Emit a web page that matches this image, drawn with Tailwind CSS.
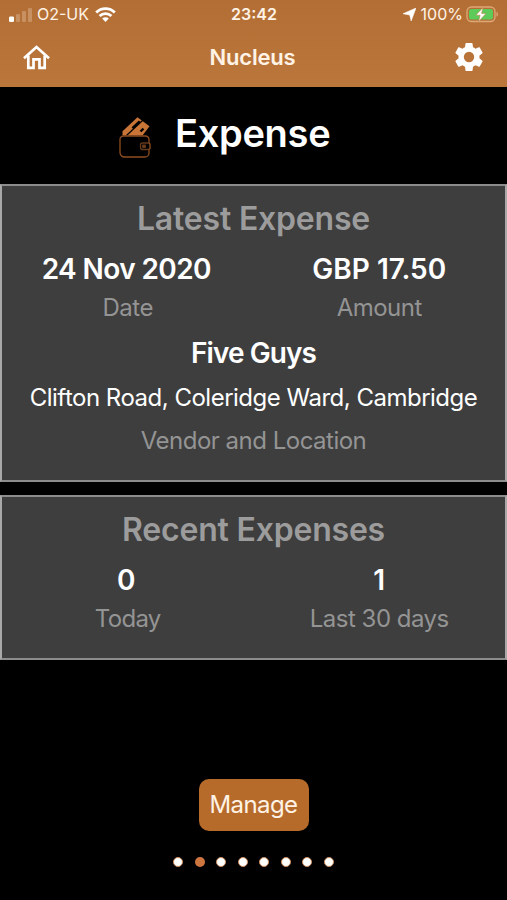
<!DOCTYPE html>
<html lang="en">
<head>
    <meta charset="UTF-8">
    <meta name="viewport" content="width=device-width, initial-scale=1.0">
    <title>Nucleus - Expense</title>
    <script src="https://cdn.jsdelivr.net/npm/@tailwindcss/browser@4"></script>
</head>
<body class="bg-black font-['Inter',sans-serif] text-white">
    <div class="flex flex-col h-[900px] w-[507px] overflow-hidden">
        <!-- Header -->
        <header class="h-[87px] shrink-0 bg-linear-to-b from-[#b36e35] to-[#bb763b] text-[#fff3e6]">
            <!-- Status bar -->
            <div class="grid grid-cols-3 items-center h-[29px] pl-[9px] pr-[8px] text-[16px] leading-[29px]">
                <div class="flex items-center">
                    <svg class="w-[23px] h-[14px]" viewBox="0 0 23 14" fill="currentColor">
                        <rect x="0" y="8.5" width="5" height="5.5" rx="1.2" fill="#fff"></rect>
                        <rect x="7" y="6" width="4" height="8" rx="1" opacity=".25"></rect>
                        <rect x="13" y="3" width="4" height="11" rx="1" opacity=".25"></rect>
                        <rect x="19" y="0" width="4" height="14" rx="1" opacity=".25"></rect>
                    </svg>
                    <span class="ml-[5px] whitespace-nowrap">O2-UK</span>
                    <svg class="ml-[6px] w-[21px] h-[15px]" viewBox="0 0 21 15" fill="none" stroke="#fff" stroke-width="2.8">
                        <path d="M1.2 5.4a13.2 13.2 0 0 1 18.6 0"></path>
                        <path d="M4.6 9a8.4 8.4 0 0 1 11.8 0"></path>
                        <path d="M7.2 11.600a4.700 4.700 0 0 1 6.600 0L10.500 15z" fill="#fff" stroke="none"></path>
                    </svg>
                </div>
                <span class="text-center font-semibold">23:42</span>
                <div class="flex items-center justify-end">
                    <svg class="w-[13px] h-[13px]" viewBox="0 0 12 12" fill="#fff">
                        <path d="M12 0 7.500 12 6.200 6.500 0 5.300z" stroke="#fff" stroke-width=".5"></path>
                    </svg>
                    <span class="ml-[5px]">100%</span>
                    <svg class="ml-[3px] w-[33px] h-[17px]" viewBox="0 0 33 17">
                        <rect x="1" y="1" width="28" height="14.500" rx="4.500" fill="none" stroke="#dfa878" stroke-width="1.300"></rect>
                        <rect x="3" y="3" width="24" height="10.500" rx="2.500" fill="#5ccb5a"></rect>
                        <path d="M30.500 5.800c2 .8 2 4.200 0 5z" fill="#dfa878"></path>
                        <path d="M17 1.500 9.800 9.200h4.300L12.600 15.500l7.400-8.100h-4.400z" fill="#fff" stroke="#b9854a" stroke-width=".6"></path>
                    </svg>
                </div>
            </div>
            <!-- Navigation bar -->
            <div class="flex items-center justify-between h-[57px] pl-[23px] pr-[24px]">
                <svg class="w-[27px] h-[25px]" viewBox="0 0 27 25" fill="none" stroke="#fff" stroke-width="2.700">
                    <path d="M1 13.300 13.500 2 26 13.300"></path>
                    <path d="M5.300 10.500v12.300h5.200v-8.400h6v8.400h5.200V10.500"></path>
                </svg>
                <h1 class="text-[22px] font-semibold tracking-[-0.2px]">Nucleus</h1>
                <svg class="w-[28px] h-[28px] -mt-[2px]" viewBox="2 2 20 20" fill="#fff">
                    <path d="M19.430 12.980c.04-.32.07-.64.07-.98s-.03-.66-.07-.98l2.110-1.650c.19-.15.24-.42.12-.64l-2-3.460c-.12-.22-.39-.3-.61-.22l-2.490 1c-.52-.4-1.080-.73-1.690-.98l-.38-2.650A.488.488 0 0 0 14 2h-4c-.25 0-.46.18-.49.42l-.38 2.650c-.61.25-1.170.59-1.690.98l-2.490-1c-.23-.09-.49 0-.61.22l-2 3.460c-.13.22-.07.49.12.64l2.110 1.650c-.04.32-.07.65-.07.98s.03.66.07.98l-2.110 1.650c-.19.15-.24.42-.12.64l2 3.460c.12.22.39.3.61.22l2.490-1c.52.4 1.080.73 1.690.98l.38 2.650c.03.24.24.42.49.42h4c.25 0 .46-.18.49-.42l.38-2.650c.61-.25 1.170-.59 1.690-.98l2.490 1c.23.09.49 0 .61-.22l2-3.460c.12-.22.07-.49-.12-.64zM12 15.700a3.700 3.700 0 1 1 0-7.400 3.700 3.700 0 0 1 0 7.400z"></path>
                </svg>
            </div>
        </header>

        <!-- Page title -->
        <div class="flex items-center h-[97px] shrink-0 pl-[118px]">
            <svg class="w-[34px] h-[42px] mt-[5px]" viewBox="0 0 34 42" fill="none">
                <path d="M4.500 18.500V14.300L19.500.300 31.500 9.300 24.500 18.500z" fill="#c87537"></path>
                <path d="M8.500 18.500 24.800 3.300" stroke="#000" stroke-width="1.200"></path>
                <path d="m14.500 11.300 7.300-6.900" stroke="#000" stroke-width="2.600"></path>
                <path d="m22.500 14.500 3-2.800" stroke="#000" stroke-width="2.300"></path>
                <path d="M31 26v-3.500a3.500 3.500 0 0 0-3.500-3.500H5.500A3.500 3.500 0 0 0 2 22.500v13A4.500 4.500 0 0 0 6.500 40H27a4 4 0 0 0 4-4v-3.500M31 26l1 1v4.500l-1 1" stroke="#8f4e20" stroke-width="1.300"></path>
                <path d="M31 26h-6.500a2 2 0 0 0-2 2v2.500a2 2 0 0 0 2 2H31" stroke="#63391b" stroke-width="1.300"></path>
                <rect x="24" y="27.500" width="4" height="3.500" rx="1" fill="#63391b"></rect>
            </svg>
            <h2 class="ml-[23px] text-[38px] leading-[48px] font-semibold tracking-[-0.3px] -mt-[5px]">Expense</h2>
        </div>

        <!-- Latest expense -->
        <section class="h-[298px] shrink-0 border-2 border-[#8c8c8c] border-x-[#a8a8a8] bg-[#3e3e3e] text-center whitespace-nowrap">
            <h3 class="pt-[1px] text-[32px] leading-[64px] font-semibold tracking-[-0.2px] text-[#9c9c9c]">Latest Expense</h3>
            <div class="grid grid-cols-2">
                <div>
                    <p class="text-[28px] leading-[36px] font-semibold tracking-[-0.6px] pr-[3px]">24 Nov 2020</p>
                    <p class="text-[24px] leading-[42px] tracking-[-0.5px] text-[#949494]">Date</p>
                </div>
                <div>
                    <p class="text-[28px] leading-[36px] font-semibold">GBP 17.50</p>
                    <p class="text-[24px] leading-[42px] tracking-[-0.5px] text-[#949494]">Amount</p>
                </div>
            </div>
            <p class="text-[28px] leading-[48px] font-semibold tracking-[-0.9px]">Five Guys</p>
            <p class="text-[24px] leading-[41px] tracking-[-0.5px]">Clifton Road, Coleridge Ward, Cambridge</p>
            <p class="text-[24px] leading-[46px] tracking-[-0.5px] text-[#949494]">Vendor and Location</p>
        </section>

        <!-- Recent expenses -->
        <section class="mt-[13px] h-[165px] shrink-0 border-2 border-[#8c8c8c] border-x-[#a8a8a8] bg-[#3e3e3e] text-center whitespace-nowrap">
            <h3 class="pt-[1px] text-[32px] leading-[64px] font-semibold tracking-[-0.2px] text-[#9c9c9c]">Recent Expenses</h3>
            <div class="grid grid-cols-2">
                <div>
                    <p class="text-[28px] leading-[36px] font-semibold pr-[3px]">0</p>
                    <p class="text-[24px] leading-[42px] tracking-[-0.7px] text-[#949494]">Today</p>
                </div>
                <div>
                    <p class="text-[28px] leading-[36px] font-semibold">1</p>
                    <p class="text-[24px] leading-[42px] tracking-[-0.5px] text-[#949494]">Last 30 days</p>
                </div>
            </div>
        </section>

        <button class="mt-[119px] mx-auto shrink-0 w-[110px] h-[52px] rounded-[10px] bg-[#b76b2b] text-[24px] tracking-[-0.6px] text-[#fff3e6]">Manage</button>

        <!-- Page indicator -->
        <div class="mt-[26px] flex justify-center gap-[11.6px]">
            <span class="size-[10px] rounded-full bg-white border border-[#c98b5e]"></span>
            <span class="size-[10px] rounded-full bg-[#cd7640]"></span>
            <span class="size-[10px] rounded-full bg-white border border-[#c98b5e]"></span>
            <span class="size-[10px] rounded-full bg-white border border-[#c98b5e]"></span>
            <span class="size-[10px] rounded-full bg-white border border-[#c98b5e]"></span>
            <span class="size-[10px] rounded-full bg-white border border-[#c98b5e]"></span>
            <span class="size-[10px] rounded-full bg-white border border-[#c98b5e]"></span>
            <span class="size-[10px] rounded-full bg-white border border-[#c98b5e]"></span>
        </div>
    </div>
</body>
</html>
